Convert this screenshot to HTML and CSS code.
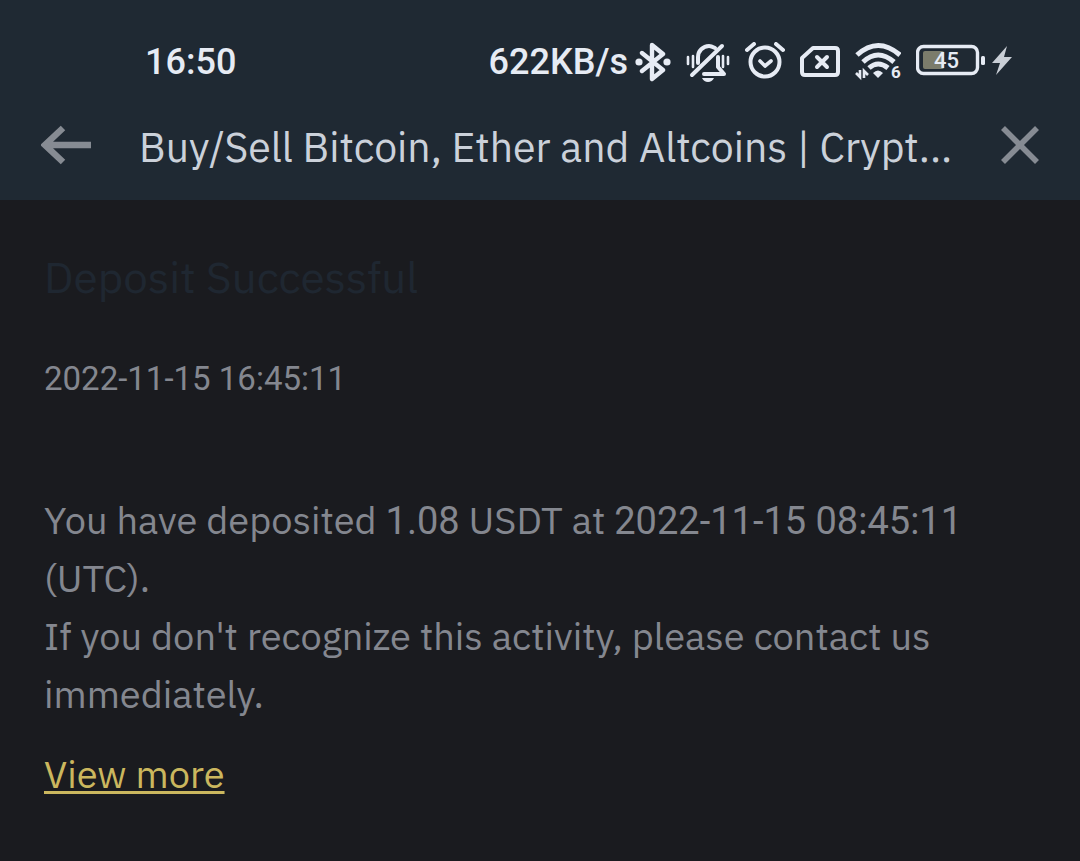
FILE: index.html
```html
<!DOCTYPE html>
<html lang="en">
<head>
    <meta charset="UTF-8">
    <title>Deposit Successful</title>
    <meta name="viewport" content="width=device-width, initial-scale=1">
    <link rel="stylesheet" href="styles.css">
</head>
<body>
    <header class="top">
        <div class="status-bar">
            <span class="clock">16:50</span>
            <div class="status-right">
                <span class="speed">622KB/s</span>
                <!-- bluetooth -->
                <svg class="icon" width="36" height="40" viewBox="0 0 36 40">
                    <path d="M7 11 28 28 17 37V3L28 12 7 29" fill="none" stroke="currentColor" stroke-width="4.4" stroke-linejoin="round" stroke-linecap="round"/>
                    <circle cx="4" cy="20" r="3.6"/>
                    <circle cx="32" cy="20" r="3.6"/>
                </svg>
                <!-- muted bell -->
                <svg class="icon" width="44" height="40" viewBox="0 0 44 40">
                    <g fill="none" stroke="currentColor" stroke-linecap="round" stroke-linejoin="round">
                        <path d="M2 15v7M7 14v11M37 14v11M42 15v7" stroke-width="2.6"/>
                        <path d="M6 33 36 4" stroke-width="4"/>
                        <path d="M12 21v-6c0-6 5-11 11-11 2 0 4 1 6 2" stroke-width="4"/>
                        <path d="M18 32h20l-6-7V15" stroke-width="4"/>
                    </g>
                    <path d="M16 36h12q-2 4-6 4t-6-4z"/>
                </svg>
                <!-- alarm -->
                <svg class="icon" width="40" height="40" viewBox="0 0 40 40">
                    <g fill="none" stroke="currentColor" stroke-width="4" stroke-linecap="round" stroke-linejoin="round">
                        <circle cx="20" cy="20" r="14.5"/>
                        <path d="M2 8 9 2M31 2l7 6"/>
                        <path d="m15 19 5 5 6-5" stroke-width="3.6"/>
                    </g>
                </svg>
                <!-- no sim -->
                <svg class="icon" width="40" height="40" viewBox="0 0 40 40">
                    <g fill="none" stroke="currentColor" stroke-width="4" stroke-linecap="round" stroke-linejoin="round">
                        <path d="M13 6h22q3 0 3 3v21q0 3-3 3H5q-3 0-3-3V16z"/>
                        <path d="m17 15 10 10M27 15 17 25"/>
                    </g>
                </svg>
                <!-- wifi 6 -->
                <svg class="icon" width="46" height="40" viewBox="0 0 46 40">
                    <g fill="none" stroke="currentColor" stroke-width="5">
                        <path d="M2 13q21-19 43 0"/>
                        <path d="M8 20q15-14 31 0"/>
                        <path d="M14 26q9-8 19 0"/>
                    </g>
                    <path d="M18 31q5-5 10 0l-5 5z"/>
                    <path d="M5 28v7L1 31M9 36v-7l4 4" fill="none" stroke="currentColor" stroke-width="2.6"/>
                    <text class="wifi-gen" x="36" y="36">6</text>
                </svg>
                <!-- battery -->
                <svg class="icon" width="70" height="40" viewBox="0 0 70 40">
                    <rect x="1.5" y="4.5" width="60" height="27" rx="6" fill="none" stroke="currentColor" stroke-width="3.4"/>
                    <rect class="battery-level" x="7" y="9" width="21" height="18" rx="2"/>
                    <rect x="65" y="14" width="4" height="9" rx="1.5"/>
                    <text class="battery-text" x="18" y="26">45</text>
                </svg>
                <!-- charging -->
                <svg class="icon bolt" width="20" height="40" viewBox="0 0 20 40">
                    <path d="M15 4 0 21h8L4 33 20 15h-8z"/>
                </svg>
            </div>
        </div>
        <div class="nav-bar">
            <button class="nav-button" type="button" aria-label="Back">
                <svg width="50" height="40" viewBox="0 0 50 40">
                    <path d="M22 3 4 20l18 17M5 20h45" fill="none" stroke="currentColor" stroke-width="6.5"/>
                </svg>
            </button>
            <h1 class="nav-title">Buy/Sell Bitcoin, Ether and Altcoins | Crypt...</h1>
            <button class="nav-button" type="button" aria-label="Close">
                <svg width="40" height="40" viewBox="0 0 40 40">
                    <path d="m3 3 34 34M37 3 3 37" fill="none" stroke="currentColor" stroke-width="5.6"/>
                </svg>
            </button>
        </div>
    </header>
    <main class="message">
        <h2 class="message-title">Deposit Successful</h2>
        <time class="message-date" datetime="2022-11-15T16:45:11">2022-11-15 16:45:11</time>
        <p class="message-text">
            You have deposited <span class="num">1.08</span> USDT at <span class="num">2022-11-15 08:45:11</span> (UTC).<br>
            If you don't recognize this activity, please contact us immediately.
        </p>
        <a class="more-link" href="#">View more</a>
    </main>
</body>
</html>
```
FILE: styles.css
```css
* {
    box-sizing: border-box;
}
body {
    margin: 0;
    min-height: 100vh;
    background: #1a1b1f;
    color: #84878f;
    font-family: "IBM Plex Sans", Roboto, sans-serif;
}
.top {
    background: #1f2933;
}
.status-bar {
    display: flex;
    justify-content: space-between;
    align-items: center;
    padding: 41px 68px 0 145px;
    color: #e6ebf4;
    font-family: Roboto, sans-serif;
    font-size: 36px;
    font-weight: 500;
    line-height: 42px;
}
.status-right {
    display: flex;
    align-items: center;
    gap: 15px;
}
.speed {
    margin-right: -8px;
}
.icon {
    display: block;
    fill: currentColor;
}
.wifi-gen {
    font-size: 17px;
    font-weight: 700;
}
.battery-level {
    fill: #7b7c6b;
}
.battery-text {
    font-size: 22px;
    font-weight: 500;
}
.bolt {
    margin-left: -9px;
    color: #c9ced6;
}
.nav-bar {
    display: flex;
    align-items: center;
    padding: 31px 40px 24px 41px;
}
.nav-button {
    display: block;
    padding: 0;
    border: 0;
    background: none;
    color: #868b93;
    cursor: pointer;
}
.nav-button svg {
    display: block;
}
.nav-title {
    flex: 1;
    margin: 0 0 0 48px;
    padding-top: 4px;
    overflow: hidden;
    white-space: nowrap;
    color: #cbd1da;
    font-size: 41px;
    font-weight: 400;
    line-height: 58px;
}
.message {
    padding: 47px 44px;
}
.message-title {
    margin: 0;
    color: #1f2731;
    font-size: 44px;
    font-weight: 400;
    line-height: 60px;
}
.message-date {
    display: block;
    margin-top: 50px;
    font-family: Roboto, sans-serif;
    font-size: 33px;
    line-height: 44px;
}
.message-text {
    margin: 90px 0 22px;
    font-size: 38px;
    line-height: 58px;
}
.num {
    font-family: Roboto, sans-serif;
    line-height: 1;
}
.more-link {
    color: #cbb75e;
    font-size: 38px;
    line-height: 58px;
    text-decoration-thickness: 3px;
    text-underline-offset: 3px;
}
```
